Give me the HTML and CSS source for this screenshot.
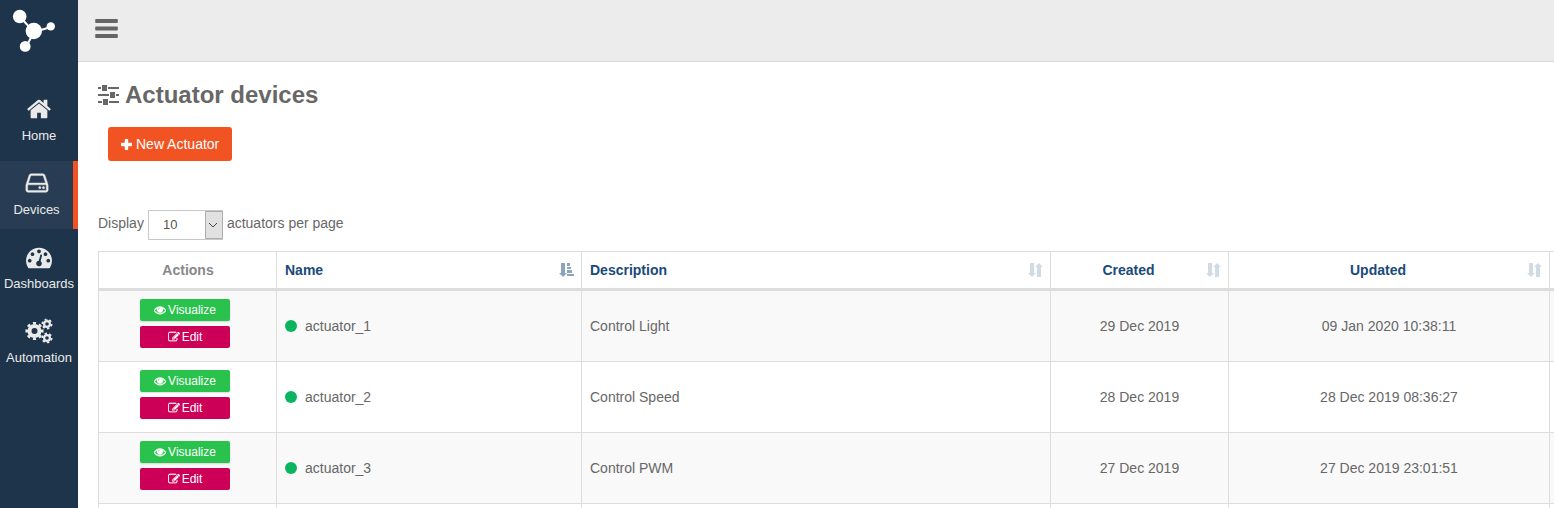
FILE: index.html
```html
<!DOCTYPE html>
<html lang="en">
<head>
<meta charset="utf-8">
<title>Actuator devices</title>
<link rel="stylesheet" href="styles.css">
</head>
<body>
<svg class="sprite" aria-hidden="true">
  <symbol id="home" viewBox="0 0 1792 1792"><path d="M1472 992v480q0 26-19 45t-45 19h-384v-384h-256v384h-384q-26 0-45-19t-19-45v-480q0-1 .5-3t.5-3l575-474 575 474q1 2 1 6zm223-69l-62 74q-8 9-21 11h-3q-13 0-21-7l-692-577-692 577q-12 8-24 7-13-2-21-11l-62-74q-8-10-7-23.5t11-21.5l719-599q32-26 76-26t76 26l244 204v-195q0-14 9-23t23-9h192q14 0 23 9t9 23v408l219 182q10 8 11 21.5t-7 23.5z"/></symbol>
  <symbol id="drive" viewBox="0 0 1792 1792"><path stroke="currentColor" stroke-width="30" d="M1168 1216q0 33-23.5 56.5t-56.5 23.5-56.5-23.5-23.5-56.5 23.5-56.5 56.5-23.5 56.5 23.5 23.5 56.5zm256 0q0 33-23.5 56.5t-56.5 23.5-56.5-23.5-23.5-56.5 23.5-56.5 56.5-23.5 56.5 23.5 23.5 56.5zm112 160v-320q0-13-9.500-22.500t-22.500-9.500h-1216q-13 0-22.500 9.500t-9.500 22.500v320q0 13 9.500 22.500t22.500 9.500h1216q13 0 22.500-9.500t9.500-22.500zm-1230-480h1180l-157-482q-4-13-16-21.500t-26-8.500h-782q-14 0-26 8.500t-16 21.500zm1358 160v320q0 66-47 113t-113 47h-1216q-66 0-113-47t-47-113v-320q0-25 16-75l197-606q17-53 63-86t101-33h782q55 0 101 33t63 86l197 606q16 50 16 75z"/></symbol>
  <symbol id="gauge" viewBox="0 0 1792 1792"><path d="M384 1152q0-53-37.500-90.500t-90.500-37.500-90.500 37.500-37.500 90.500 37.500 90.500 90.500 37.500 90.500-37.500 37.500-90.500zm192-448q0-53-37.500-90.500t-90.500-37.500-90.500 37.500-37.500 90.500 37.500 90.500 90.500 37.500 90.500-37.500 37.500-90.500zm428 481l101-382q6-26-7.500-48.500t-38.500-29.500-48 6.500-30 39.500l-101 382q-60 5-107 43.500t-63 98.500q-20 77 20 146t117 89 146-20 89-117q16-60-6-117t-72-91zm660-33q0-53-37.500-90.500t-90.500-37.500-90.500 37.500-37.500 90.500 37.500 90.500 90.500 37.500 90.500-37.500 37.500-90.500zm-640-640q0-53-37.500-90.500t-90.500-37.500-90.500 37.500-37.500 90.500 37.500 90.500 90.500 37.500 90.500-37.500 37.500-90.500zm448 192q0-53-37.500-90.500t-90.500-37.500-90.500 37.500-37.500 90.500 37.500 90.500 90.500 37.500 90.500-37.500 37.500-90.500zm320 448q0 261-141 483-19 29-54 29h-1402q-35 0-54-29-141-221-141-483 0-182 71-348t191-286 286-191 348-71 348 71 286 191 191 286 71 348z"/></symbol>
  <symbol id="gears" viewBox="0 0 28 26">
    <g fill="none" stroke="currentColor">
      <circle cx="9.500" cy="13" r="5" stroke-width="4"/>
      <circle cx="9.500" cy="13" r="7.800" stroke-width="2.600" pathLength="80" stroke-dasharray="5 5" stroke-dashoffset="2.500"/>
      <circle cx="22" cy="6" r="2.900" stroke-width="2.200"/>
      <circle cx="22" cy="6" r="4.600" stroke-width="1.800" pathLength="60" stroke-dasharray="5 5"/>
      <circle cx="22" cy="20" r="2.900" stroke-width="2.200"/>
      <circle cx="22" cy="20" r="4.600" stroke-width="1.800" pathLength="60" stroke-dasharray="5 5"/>
    </g>
  </symbol>
  <symbol id="bars" viewBox="0 0 24 20"><path d="M1 1h21a.8.8 0 0 1 .8.800v2.400a.8.8 0 0 1-.8.800H1a.8.8 0 0 1-.8-.8V1.800A.8.8 0 0 1 1 1zM1 8.500h21a.8.8 0 0 1 .8.800v2.400a.8.8 0 0 1-.8.800H1a.8.8 0 0 1-.8-.8V9.300A.8.8 0 0 1 1 8.500zM1 16h21a.8.8 0 0 1 .8.800v2.400a.8.8 0 0 1-.8.800H1a.8.8 0 0 1-.8-.8v-2.400A.8.8 0 0 1 1 16z"/></symbol>
  <symbol id="sliders" viewBox="0 0 21 20"><path d="M0 2h21v2H0zM0 9h21v2H0zM0 16h21v2H0z"/><path fill="#fff" d="M3 0h7v6H3zM11 7h7v6h-7zM4 14h7v6H4z"/><path d="M4 0h5v6H4zM12 7h5v6h-5zM5 14h5v6H5z"/></symbol>
  <symbol id="eye" viewBox="0 0 1792 1792"><path stroke="currentColor" stroke-width="60" d="M1664 960q-152-236-381-353 61 104 61 225 0 185-131.500 316.500t-316.500 131.500-316.500-131.500-131.500-316.500q0-121 61-225-229 117-381 353 133 205 333.500 326.500t434.500 121.500 434.500-121.500 333.500-326.500zm-720-384q0-20-14-34t-34-14q-125 0-214.500 89.500t-89.500 214.500q0 20 14 34t34 14 34-14 14-34q0-86 61-147t147-61q20 0 34-14t14-34zm848 384q0 34-20 69-140 230-376.500 368.500t-499.500 138.500-499.500-139-376.500-368q-20-35-20-69t20-69q140-229 376.500-368t499.500-139 499.500 139 376.500 368q20 35 20 69z"/></symbol>
  <symbol id="edit" viewBox="0 0 1792 1792"><path stroke="currentColor" stroke-width="30" d="M888 1184l116-116-152-152-116 116v56h96v96h56zm440-720q-16-16-33 1l-350 350q-17 17-1 33t33-1l350-350q17-17 1-33zm80 594v190q0 119-84.500 203.500t-203.500 84.500h-832q-119 0-203.500-84.500t-84.500-203.500v-832q0-119 84.500-203.500t203.500-84.500h832q63 0 117 25 15 7 18 23 3 17-9 29l-49 49q-14 14-32 8-23-6-45-6h-832q-66 0-113 47t-47 113v832q0 66 47 113t113 47h832q66 0 113-47t47-113v-126q0-13 9-22l64-64q15-15 35-7t20 29zm-96-738l288 288-672 672h-288v-288zm444 132l-92 92-288-288 92-92q28-28 68-28t68 28l152 152q28 28 28 68t-28 68z"/></symbol>
  <symbol id="plus" viewBox="0 0 11 11"><path d="M4.600 0h1.800q.8 0 .8.800v3h3q.8 0 .8.800v1.800q0 .8-.8.800h-3v3q0 .8-.8.800H4.600q-.8 0-.8-.8v-3h-3Q0 7.200 0 6.400V4.600q0-.8.800-.8h3v-3q0-.8.800-.8z"/></symbol>
  <symbol id="sort" viewBox="0 0 15 14"><path d="M2 0h4v10h2L4 14 0 10h2zM9 14h4V4h2L11 0 7 4h2z"/></symbol>
  <symbol id="sort-asc" viewBox="0 0 15 14"><path d="M2 0h4v10h2L4 14 0 10h2zM8 0h3v3H8zM8 4h4v2H8zM8 7h5v3H8zM8 11h7v2H8z"/></symbol>
</svg>
<div class="app">
  <aside class="sidebar">
    <a class="logo" href="#" aria-label="Start page">
      <svg viewBox="0 0 44 44"><path stroke="#fff" stroke-width="2" fill="none" d="M8 8l14 15 17-5M22 23l-8 15"/><g fill="#fff"><circle cx="7.700" cy="7.500" r="6.800"/><circle cx="21.800" cy="22" r="8.200"/><circle cx="38.800" cy="17.400" r="4.200"/><circle cx="13.200" cy="37.400" r="5.400"/></g></svg>
    </a>
    <nav class="menu">
      <a class="menu-item" href="#"><svg class="menu-icon"><use href="#home"/></svg>Home</a>
      <a class="menu-item active" href="#"><svg class="menu-icon"><use href="#drive"/></svg>Devices</a>
      <a class="menu-item" href="#"><svg class="menu-icon"><use href="#gauge"/></svg>Dashboards</a>
      <a class="menu-item" href="#"><svg class="menu-icon gears"><use href="#gears"/></svg>Automation</a>
    </nav>
  </aside>
  <div class="page">
    <header class="topbar"><button class="toggle" type="button" aria-label="Toggle menu"><svg><use href="#bars"/></svg></button></header>
    <main class="content">
      <h1 class="title"><svg><use href="#sliders"/></svg>Actuator devices</h1>
      <button class="new" type="button"><svg><use href="#plus"/></svg>New Actuator</button>
      <div class="length">
        <label for="count">Display</label>
        <span class="select"><select id="count"><option>10</option><option>25</option><option>50</option></select><svg class="arrow" viewBox="0 0 18 28"><path class="arrow-box" d="M.5.5h17v27H.5z"/><path class="arrow-mark" d="M4 12l4 4 4-4"/></svg></span>
        <span>actuators per page</span>
      </div>
      <table class="grid">
        <colgroup><col class="w-small"><col class="w-name"><col><col class="w-small"><col class="w-updated"><col class="w-small"></colgroup>
        <thead>
          <tr>
            <th class="plain">Actions</th>
            <th><div class="head left"><span>Name</span><svg class="on"><use href="#sort-asc"/></svg></div></th>
            <th><div class="head left"><span>Description</span><svg><use href="#sort"/></svg></div></th>
            <th><div class="head"><span>Created</span><svg><use href="#sort"/></svg></div></th>
            <th><div class="head"><span>Updated</span><svg><use href="#sort"/></svg></div></th>
            <th></th>
          </tr>
        </thead>
        <tbody>
          <tr>
            <td><div class="actions"><button class="btn view" type="button"><svg><use href="#eye"/></svg>Visualize</button><button class="btn edit" type="button"><svg><use href="#edit"/></svg>Edit</button></div></td>
            <td class="left"><div class="name"><i class="dot"></i>actuator_1</div></td><td class="left">Control Light</td><td>29 Dec 2019</td><td>09 Jan 2020 10:38:11</td><td></td>
          </tr>
          <tr>
            <td><div class="actions"><button class="btn view" type="button"><svg><use href="#eye"/></svg>Visualize</button><button class="btn edit" type="button"><svg><use href="#edit"/></svg>Edit</button></div></td>
            <td class="left"><div class="name"><i class="dot"></i>actuator_2</div></td><td class="left">Control Speed</td><td>28 Dec 2019</td><td>28 Dec 2019 08:36:27</td><td></td>
          </tr>
          <tr>
            <td><div class="actions"><button class="btn view" type="button"><svg><use href="#eye"/></svg>Visualize</button><button class="btn edit" type="button"><svg><use href="#edit"/></svg>Edit</button></div></td>
            <td class="left"><div class="name"><i class="dot"></i>actuator_3</div></td><td class="left">Control PWM</td><td>27 Dec 2019</td><td>27 Dec 2019 23:01:51</td><td></td>
          </tr>
          <tr><td></td><td></td><td></td><td></td><td></td><td></td></tr>
        </tbody>
      </table>
    </main>
  </div>
</div>
</body>
</html>
```
FILE: styles.css
```css
* { box-sizing: border-box; }
body { margin: 0; background: #fff; color: #676767; font: 14px/20px "Liberation Sans", Arial, sans-serif; }
button, select { font: inherit; color: inherit; }
button { border: 0; cursor: pointer; }
a { text-decoration: none; }
svg { display: block; fill: currentColor; flex: none; overflow: visible; }
.sprite { position: absolute; width: 0; height: 0; }

.app { display: flex; height: 100vh; overflow: hidden; }
.sidebar { flex: none; width: 78px; background: #1e344b; color: #eaeaea; }
.logo { display: block; height: 87px; padding: 9px 12px; }
.logo svg { width: 44px; height: 44px; }
.menu { display: flex; flex-direction: column; gap: 6px; }
.menu-item { display: flex; flex-direction: column; align-items: center; height: 68px; padding-top: 9px; gap: 4px; color: #eaeaea; font-size: 13px; border: 0 solid #f15322; }
.menu-item.active { background: #283d53; border-right-width: 5px; }
.menu-icon { width: 26px; height: 26px; }
.menu-icon.gears { width: 28px; }

.page { flex: 1; min-width: 0; overflow: hidden; }
.topbar { height: 62px; padding: 18px 17px; background: #ececec; border-bottom: 1px solid #dadada; }
.toggle { padding: 0; background: none; color: #656565; }
.toggle svg { width: 24px; height: 20px; }
.content { padding: 17px 0 0 20px; }
.title { display: flex; align-items: center; gap: 6px; margin: 0 0 16px; font-size: 24px; line-height: 32px; }
.title svg { width: 21px; height: 20px; }
.new { display: flex; align-items: center; gap: 4px; height: 34px; margin-left: 10px; padding: 0 13px; border-radius: 3px; background: #f15322; color: #fff; }
.new svg { width: 11px; height: 11px; }

.length { display: flex; align-items: center; gap: 4px; margin: 49px 0 11px; }
.length > label, .length > span:last-child { padding-bottom: 4px; }
.select { position: relative; width: 75px; height: 30px; }
.select select { appearance: none; width: 100%; height: 100%; padding: 0 14px; border: 1px solid #c8c8c8; border-radius: 0; background: #fff; color: #555; font-size: 13px; }
.arrow { position: absolute; top: 1px; right: 0; width: 18px; height: 28px; pointer-events: none; }
.arrow-box { fill: #e1e1e1; stroke: #adadad; }
.arrow-mark { fill: none; stroke: #444; }

.grid { width: calc(100% + 174px); table-layout: fixed; border-spacing: 0; border: 1px solid #ddd; border-width: 1px 0 0 1px; }
.w-small { width: 178px; }
.w-name { width: 305px; }
.w-updated { width: 321px; }
th, td { padding: 8px; border: 0 solid #ddd; border-width: 0 1px 1px 0; text-align: center; }
th { border-bottom-width: 3px; padding-right: 7px; color: #1a4a7a; }
th.plain { color: #888; }
td.left, .head.left { text-align: left; }
.head { display: flex; align-items: center; gap: 8px; }
.head span { flex: 1; }
.head svg { width: 15px; height: 14px; color: #d1dbe4; }
.head svg.on { color: #8ca4bc; }
tbody tr { height: 71px; }
tbody tr:nth-child(odd) { background: #f9f9f9; }
tbody tr:last-child { background: #fff; }
.actions { display: flex; flex-direction: column; align-items: center; gap: 5px; padding: 0 5px 5px 0; }
.btn { display: flex; align-items: center; justify-content: center; gap: 2px; width: 90px; height: 22px; padding: 0; border-radius: 2px; color: #fff; font-size: 12px; }
.btn svg { width: 12px; height: 12px; }
.btn.view { background: #29c24d; box-shadow: 0 1px 2px rgba(0, 0, 0, .15); }
.btn.edit { background: #cc0057; }
.name { display: flex; align-items: center; gap: 8px; }
.dot { width: 12px; height: 12px; border-radius: 50%; background: #0bb560; }
```
